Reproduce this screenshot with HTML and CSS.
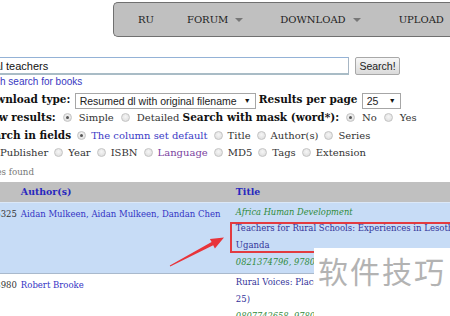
FILE: index.html
```html
<!DOCTYPE html>
<html lang="en">
<head>
    <meta charset="UTF-8">
    <title>Library Genesis</title>
    <link rel="stylesheet" href="styles.css">
</head>
<body>
    <div class="nav">
        <a class="nav-ru">RU</a>
        <a class="nav-forum">FORUM <span class="caret"></span></a>
        <a class="nav-dl">DOWNLOAD <span class="caret"></span></a>
        <a>UPLOAD</a>
    </div>

    <div class="main">
        <form class="search">
            <div class="search-row">
                <input class="req" type="text" value="rural teachers">
                <button type="button">Search!</button>
            </div>
            <a class="batch">Batch search for books</a>
            <div class="opts">
                <div class="line">
                    <b>Download type:</b> <span class="select wide">Resumed dl with original filename<i>&#9660;</i></span>
                    <b>Results per page</b> <span class="select small">25<i>&#9660;</i></span>
                </div>
                <div class="line view">
                    <b>View results:</b><span class="radio on"></span>Simple<span class="radio"></span>Detailed
                    <b>Search with mask (word*):</b><span class="radio on"></span>No<span class="radio"></span>Yes
                </div>
                <div class="line">
                    <b>Search in fields</b><span class="radio on"></span><span class="blue">The column set default</span><span class="radio"></span>Title<span class="radio"></span>Author(s)<span class="radio"></span>Series
                </div>
                <div class="line wrap">
                    <span class="radio"></span>Publisher<span class="radio"></span>Year<span class="radio"></span>ISBN<span class="radio"></span><span class="visited">Language</span><span class="radio"></span>MD5<span class="radio"></span>Tags<span class="radio"></span>Extension
                </div>
            </div>
        </form>

        <div class="found">27 files found</div>

        <table class="results">
            <tr class="head">
                <th class="c-id">ID</th>
                <th class="c-author">Author(s)</th>
                <th class="c-title">Title</th>
            </tr>
            <tr class="hl">
                <td class="c-id">1525325</td>
                <td class="c-author"><a>Aidan Mulkeen, Aidan Mulkeen, Dandan Chen</a></td>
                <td class="c-title">
                    <div class="series">Africa Human Development</div>
                    <div class="title">Teachers for Rural Schools: Experiences in Lesotho, Malawi, Mozambique, Tanzania, and<br>Uganda</div>
                    <div class="isbn">0821374796, 9780821374795</div>
                </td>
            </tr>
            <tr>
                <td class="c-id">1063980</td>
                <td class="c-author"><a>Robert Brooke</a></td>
                <td class="c-title">
                    <div class="title">Rural Voices: Place-Conscious Education and the Teaching of Writing (Practitioners Bookshelf,<br>25)</div>
                    <div class="isbn">0807742658, 9780807742655</div>
                </td>
            </tr>
        </table>
    </div>

    <div class="mark-box"></div>
    <svg class="arrow" width="450" height="316" viewBox="0 0 450 316">
        <polygon points="170.2,266.6 213.2,245.2 214.9,248.4 224,237.5 209.9,238.9 211.6,242.0 169.8,265.4" fill="#e8343a"/>
    </svg>
    <div class="watermark">软件技巧</div>
</body>
</html>
```

FILE: styles.css
```css
body { margin: 0; width: 450px; height: 316px; overflow: hidden; position: relative; background: #fff; color: #333; font-family: "DejaVu Serif", serif; font-size: 8.5px; }
a { cursor: pointer; }

.nav { display: flex; align-items: center; height: 33px; width: 420px; margin: 2px 0 0 113px; padding-left: 24px; background: #c0c0c0; border: 1px solid #707070; border-right: none; border-radius: 5px 0 0 5px; font-size: 10px; }
.nav a { display: flex; align-items: center; gap: 7px; color: #222; }
.nav-ru { margin-right: 33px; }
.nav-forum { margin-right: 37px; }
.nav-dl { margin-right: 38px; }
.caret { width: 0; height: 0; border-left: 4px solid transparent; border-right: 4px solid transparent; border-top: 4px solid #777; }

.main { margin-left: -20px; width: 720px; }
.search-row { display: flex; align-items: center; gap: 6px; margin: 20px 0 0 -3px; }
.req { width: 372px; height: 18px; box-sizing: border-box; margin: 0; padding: 0 3px; border: 1px solid #a7b6c4; border-top-color: #94b2d6; border-bottom: 2px solid #a9bcc6; font: 11px "Liberation Sans", Arial, sans-serif; color: #111; outline: none; }
.search-row button { width: 45px; height: 18px; padding: 0; background: linear-gradient(#f7f7f7, #dadada); border: 1px solid #a8a8a8; border-radius: 2px; font: 10.5px "Liberation Sans", Arial, sans-serif; color: #222; }
.batch { display: block; margin-top: 1px; font: 10px/12px "Liberation Sans", Arial, sans-serif; color: #3838c2; }

.opts { margin-top: 2px; font-size: 10px; }
.line { height: 18px; line-height: 18px; white-space: nowrap; }
.line b { color: #111; font-size: 10.5px; }
.select { display: inline-flex; align-items: center; justify-content: space-between; box-sizing: border-box; height: 16px; padding: 0 4px; vertical-align: middle; border: 1px solid #a6a6a6; background: #fff; font: 10.5px "Liberation Sans", Arial, sans-serif; color: #222; }
.select i { font-style: normal; font-size: 7px; color: #111; }
.wide { width: 181px; margin-left: 1px; }
.small { width: 39px; margin-left: 1px; }
.radio { display: inline-block; box-sizing: border-box; width: 9px; height: 9px; margin: 0 5px 0 6px; vertical-align: -1px; border: 1px solid #c4c4c4; border-radius: 50%; background: radial-gradient(circle at 50% 40%, #f6f6f6, #d9d9d9); position: relative; }
.radio.on::after { content: ''; position: absolute; left: 2px; top: 2px; width: 3px; height: 3px; border-radius: 50%; background: #555; }
.view .radio { margin: 0 7px 0 7px; }
.blue { color: #3a3ac6; }
.visited { color: #7b3fa0; }

.found { height: 18px; line-height: 18px; margin: 1px 0 0 -6px; color: #777; font-size: 8.7px; }

.results { border-collapse: collapse; margin: 1px 0 0 -3px; width: 723px; }
.results th, .results td { padding: 0 2px; text-align: left; vertical-align: top; }
.head th { height: 20px; background: #c0c0c0; color: #2828bf; font-size: 9.4px; line-height: 20px; }
.c-id { width: 36px; }
.c-author { width: 211px; }
.results td { line-height: 17px; }
.results td.c-id { padding-top: 3px; }
.results td.c-author { padding-top: 3px; }
.results td.c-author a { color: #3434c4; }
.hl td { background: #c7dcf6; border-top: 1px solid #dbe8f8; border-bottom: 1px solid #a9b9cc; height: 67px; }
.series { font-style: italic; color: #2f8a3a; font-size: 8.3px; line-height: 15px; margin-top: 2px; }
.title { color: #333399; white-space: nowrap; }
.isbn { font-style: italic; color: #2f8a3a; font-size: 8.3px; line-height: 17px; }

.mark-box { position: absolute; left: 230px; top: 222px; width: 240px; height: 27px; border: 2px solid #e23b40; }
.arrow { position: absolute; left: 0; top: 0; }
.watermark { position: absolute; left: 314px; top: 248px; width: 136px; height: 68px; padding: 4px 0 0 4px; box-sizing: border-box; background: #fff; color: #b3b3b3; font: 30px/36px "Noto Sans CJK SC", sans-serif; letter-spacing: 2px; white-space: nowrap; }
```
